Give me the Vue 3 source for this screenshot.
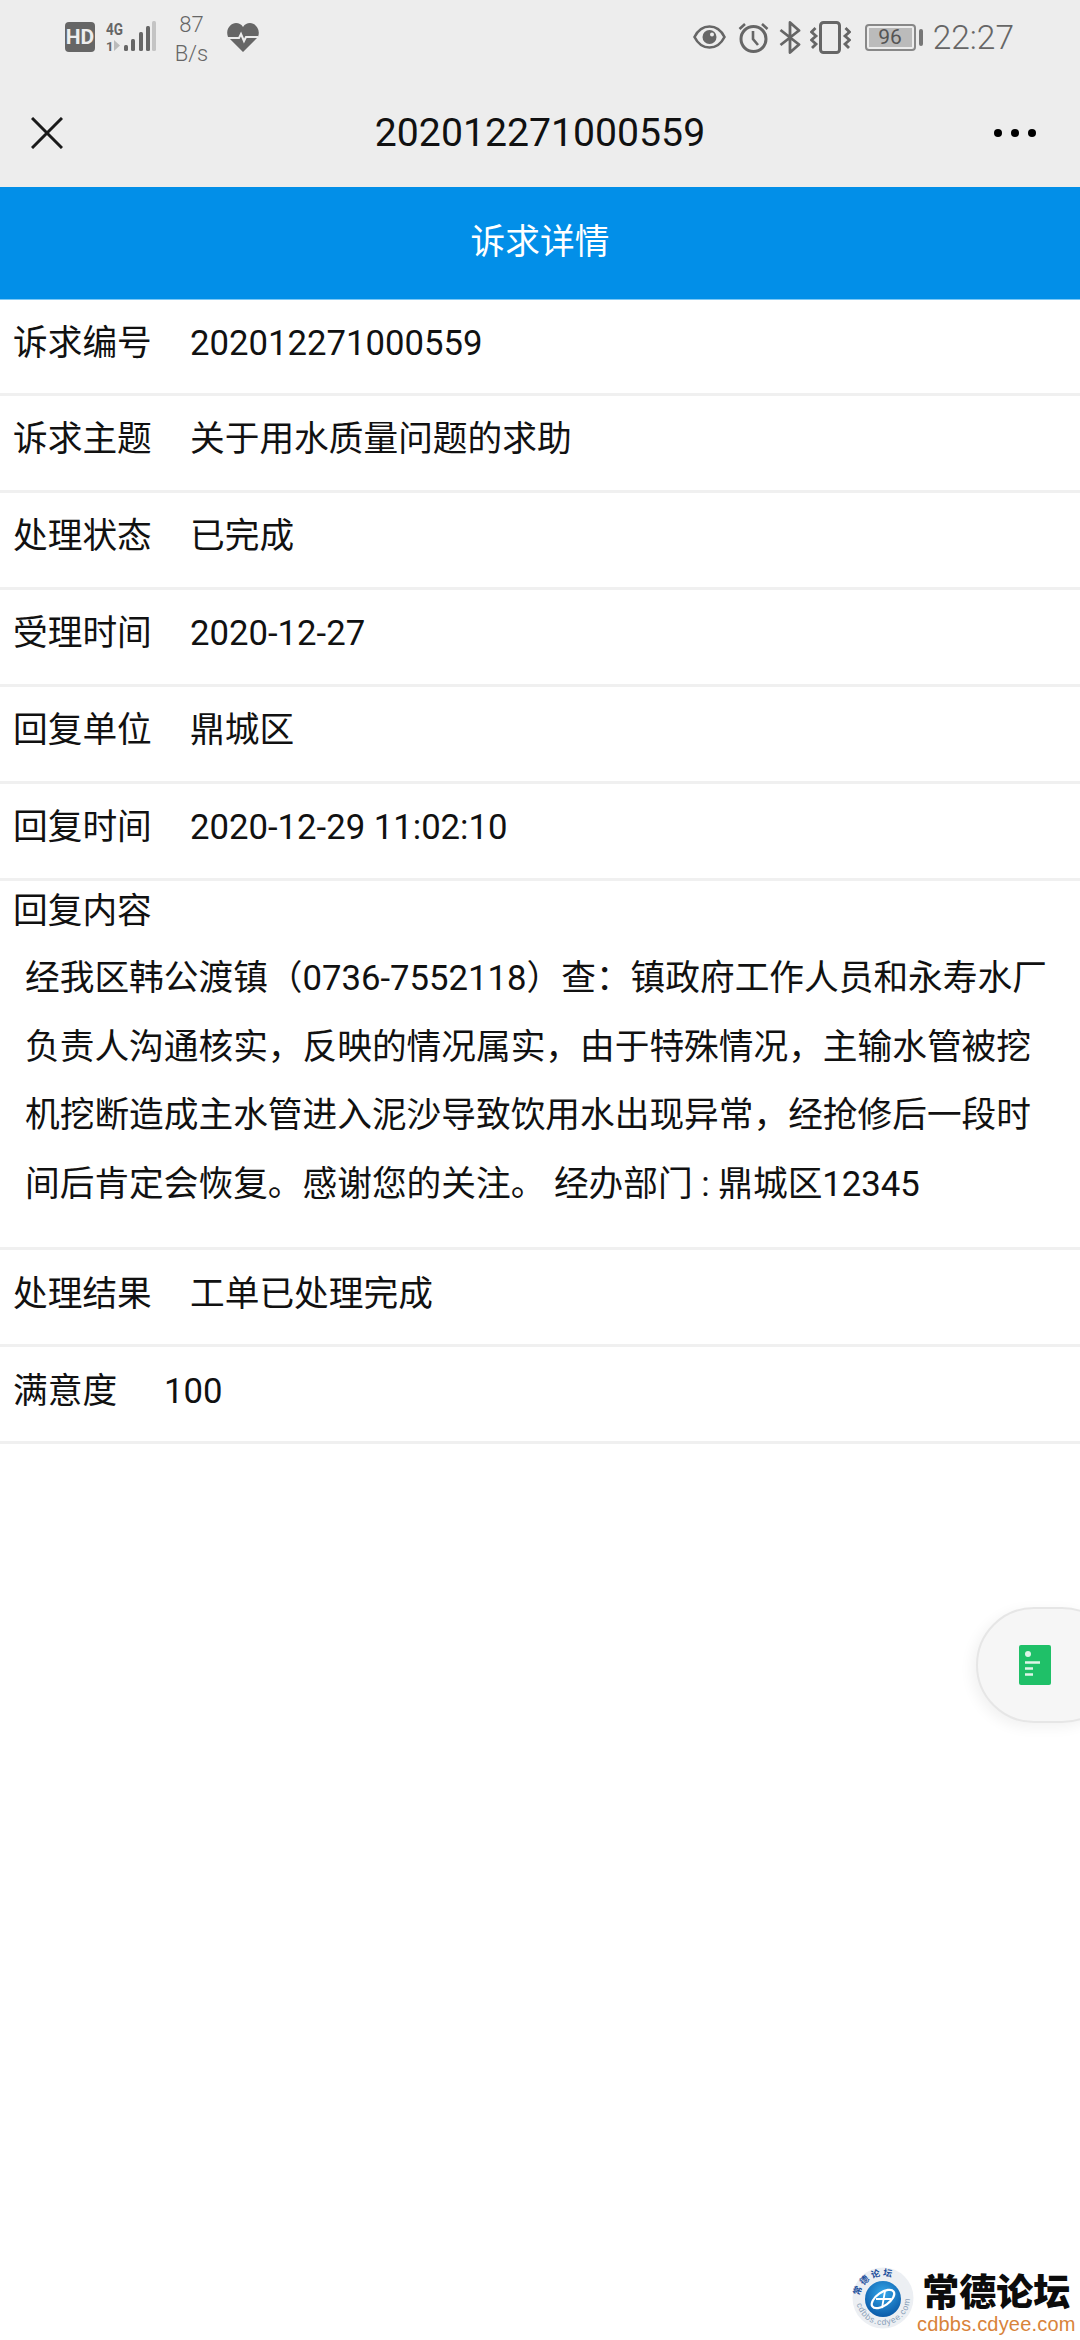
<script setup>
const rows = [
  { label: '诉求编号', value: '202012271000559' },
  { label: '诉求主题', value: '关于用水质量问题的求助' },
  { label: '处理状态', value: '已完成' },
  { label: '受理时间', value: '2020-12-27' },
  { label: '回复单位', value: '鼎城区' },
  { label: '回复时间', value: '2020-12-29 11:02:10' }
]
const bars = [
  { x: 18, y: 24, h: 6 },
  { x: 25, y: 18, h: 12 },
  { x: 33, y: 11, h: 19 },
  { x: 40, y: 5, h: 25 },
  { x: 46, y: 0, h: 30 }
]
</script>

<template>
  <div class="page">
    <header class="status">
      <div class="status-left">
        <svg class="hd" width="30" height="30" viewBox="0 0 30 30">
          <rect width="30" height="30" rx="4" fill="#666" />
          <text x="15" y="22" text-anchor="middle" class="hd-text">HD</text>
        </svg>
        <svg class="net" width="50" height="32" viewBox="0 0 50 32">
          <text x="0" y="14" class="net-text" textLength="17" lengthAdjust="spacingAndGlyphs">4G</text>
          <text x="0" y="30" class="net-small">1</text>
          <path d="M8 19v11l6-5.500z" fill="#bbb" />
          <rect v-for="(b, i) in bars" :key="i" :x="b.x" :y="b.y" width="4" :height="b.h" rx="1.500" :fill="i === 4 ? '#c4c4c4' : '#666'" />
        </svg>
        <div class="speed"><span>87</span><span>B/s</span></div>
        <svg width="32" height="29" viewBox="0 0 32 29">
          <path d="M16 29 1 14C-2 6 4 0 9 0c3 0 5 1 7 4 2-3 4-4 7-4 5 0 11 6 8 14z" fill="#666" />
          <path d="M1 15h11l2-4 3 7 2-4h12" fill="none" stroke="#ededed" stroke-width="2" />
        </svg>
      </div>
      <div class="status-right">
        <svg class="eye" width="33" height="26" viewBox="0 0 33 26">
          <path d="M1.500 13C5 6 10 2.500 16.500 2.500S28 6 31.500 13C28 20 23 23.500 16.500 23.500S5 20 1.500 13z" fill="none" stroke="#666" stroke-width="2.600" />
          <circle cx="16.500" cy="13" r="7" fill="#666" />
          <circle cx="19" cy="10.500" r="2" fill="#ededed" />
        </svg>
        <svg class="alarm" width="31" height="31" viewBox="0 0 31 31">
          <circle cx="15.500" cy="17" r="12.500" fill="none" stroke="#666" stroke-width="3" />
          <path d="M15 9v8l5 6" fill="none" stroke="#666" stroke-width="2.600" />
          <path d="M1.500 7 7 2M29.500 7 24 2" fill="none" stroke="#666" stroke-width="2.600" />
        </svg>
        <svg class="bt" width="22" height="33" viewBox="0 0 22 33">
          <path d="M1.500 9 20 23.500 11 31.500V1.500L20 9.500 1.500 24" fill="none" stroke="#666" stroke-width="2.800" stroke-linejoin="round" />
        </svg>
        <svg class="vib" width="41" height="33" viewBox="0 0 41 33">
          <rect x="10.500" y="1.500" width="19" height="30" rx="3" fill="none" stroke="#666" stroke-width="3" />
          <path d="M5.500 7 1.500 11 6 15 1.500 19 6 23 2 27M35.500 7 39.500 11 35 15 39.500 19 35 23 39 27" fill="none" stroke="#666" stroke-width="2.800" />
        </svg>
        <div class="battery-wrap">
          <div class="battery"><span>96</span></div>
          <i class="battery-nub"></i>
        </div>
        <span class="time">22:27</span>
      </div>
    </header>

    <nav class="nav">
      <svg width="32" height="32" viewBox="0 0 32 32">
        <path d="M1 1 31 31M31 1 1 31" stroke="#1a1a1a" stroke-width="3" fill="none" />
      </svg>
      <span class="nav-title">202012271000559</span>
      <svg class="nav-more" width="42" height="8" viewBox="0 0 42 8">
        <circle cx="4" cy="4" r="4" />
        <circle cx="21" cy="4" r="4" />
        <circle cx="38" cy="4" r="4" />
      </svg>
    </nav>

    <div class="banner">诉求详情</div>

    <section>
      <div v-for="row in rows" :key="row.label" class="row">
        <span class="label">{{ row.label }}</span>
        <span>{{ row.value }}</span>
      </div>
      <div class="reply">
        <div class="reply-label">回复内容</div>
        <p class="reply-text">经我区韩公渡镇（0736-7552118）查：镇政府工作人员和永寿水厂负责人沟通核实，反映的情况属实，由于特殊情况，主输水管被挖机挖断造成主水管进入泥沙导致饮用水出现异常，经抢修后一段时间后肯定会恢复。感谢您的关注。 经办部门 : 鼎城区12345</p>
      </div>
      <div class="row row-low">
        <span class="label">处理结果</span>
        <span>工单已处理完成</span>
      </div>
      <div class="row row-low">
        <span class="label label-short">满意度</span>
        <span>100</span>
      </div>
    </section>

    <div class="float-btn">
      <svg width="32" height="40" viewBox="0 0 32 40">
        <rect width="32" height="40" rx="2" fill="#1fc068" />
        <circle cx="9" cy="9" r="3" fill="#dff5e8" />
        <path d="M6 17.500h15M6 23.500h8M6 29.500h8" stroke="#dff5e8" stroke-width="2.500" />
      </svg>
    </div>

    <div class="mark">
      <svg width="62" height="62" viewBox="0 0 62 62">
        <defs>
          <radialGradient id="globe" cx="50%" cy="35%" r="65%">
            <stop offset="0" stop-color="#35a8ea" />
            <stop offset="1" stop-color="#0a5aa8" />
          </radialGradient>
          <path id="ring-top" d="M7 33a24 24 0 0 1 48 0" />
          <path id="ring-bottom" d="M4 31a27 27 0 0 0 54 0" />
        </defs>
        <circle cx="31" cy="31" r="30.500" fill="#eceff3" />
        <circle cx="31" cy="32" r="18" fill="url(#globe)" />
        <ellipse cx="31" cy="32" rx="13" ry="6.500" transform="rotate(-35 31 32)" fill="none" stroke="#fff" stroke-width="2.200" />
        <path d="M24 32h15M33 24l-3 17" stroke="#fff" stroke-width="1.800" />
        <text class="ring-cn"><textPath href="#ring-top" startOffset="4">常 德 论 坛</textPath></text>
        <text class="ring-en"><textPath href="#ring-bottom" startOffset="6">cdbbs.cdyee.com</textPath></text>
      </svg>
      <div class="mark-text">
        <span class="mark-cn">常德论坛</span>
        <span class="mark-en">cdbbs.cdyee.com</span>
      </div>
    </div>
  </div>
</template>

<style>
html, body { margin: 0; background: #fff; }
</style>

<style scoped>
.page {
  position: relative;
  width: 1080px;
  height: 2340px;
  overflow: hidden;
  background: #fff;
  color: #111;
  font-family: Roboto, "Noto Sans CJK SC", sans-serif;
  font-size: 34.700px;
}
.status {
  box-sizing: border-box;
  height: 74px;
  padding: 0 66px 0 65px;
  display: flex;
  justify-content: space-between;
  align-items: center;
  background: #ededed;
}
.status-left, .status-right { display: flex; align-items: center; }
.status-left { gap: 11px; }
.net { overflow: visible; }
.speed {
  display: flex;
  flex-direction: column;
  align-items: center;
  width: 33px;
  margin: 3px 8px 0 8px;
  font-size: 22px;
  line-height: 29px;
  color: #666;
  font-weight: 300;
}
.hd-text { font: 700 21px Roboto, sans-serif; fill: #ededed; }
.net-text { font: 700 17px Roboto, sans-serif; fill: #666; }
.net-small { font: 700 13px Roboto, sans-serif; fill: #666; }
.alarm { margin-left: 12px; }
.bt { margin-left: 10px; }
.vib { margin-left: 9px; }
.battery-wrap { display: flex; align-items: center; gap: 3px; margin-left: 14px; }
.battery {
  box-sizing: border-box;
  width: 51px;
  height: 27px;
  border: 2px solid #888;
  border-radius: 4px;
  padding: 2px;
  display: flex;
}
.battery span {
  flex: 1;
  background: #bbb;
  color: #555;
  font-size: 21px;
  line-height: 19px;
  text-align: center;
}
.battery-nub { width: 4px; height: 17px; background: #777; border-radius: 2px; }
.time { margin-left: 10px; font-size: 33.500px; font-weight: 300; color: #666; }
.nav {
  box-sizing: border-box;
  height: 113px;
  padding: 5px 31px 0 31px;
  display: grid;
  grid-template-columns: 1fr auto 1fr;
  align-items: center;
  background: #ededed;
}
.nav-title { font-size: 39.200px; }
.nav-more { justify-self: end; margin-right: 13px; }
.banner {
  box-sizing: border-box;
  height: 113px;
  padding-bottom: 9px;
  display: flex;
  justify-content: center;
  align-items: center;
  background: #028fe8;
  border-bottom: 1px solid #7cc8f5;
  color: #fff;
}
.row {
  box-sizing: border-box;
  height: 97px;
  padding: 23px 0 0 13px;
  display: flex;
  gap: 38px;
  line-height: 40px;
  border-bottom: 3px solid #f0f0f0;
}
.row:first-child { height: 96px; }
.row-low { padding-top: 24px; }
.label { width: 139px; white-space: nowrap; }
.label-short { width: 104px; margin-right: 9px; }
.reply {
  box-sizing: border-box;
  height: 369px;
  padding: 10px 0 0 13px;
  border-bottom: 3px solid #f0f0f0;
}
.reply-label { line-height: 40px; }
.reply-text {
  margin: 0;
  padding: 13px 30px 0 12px;
  line-height: 68.600px;
}
.float-btn {
  position: absolute;
  top: 1607px;
  right: -40px;
  box-sizing: border-box;
  width: 144px;
  height: 116px;
  padding-left: 41px;
  display: flex;
  align-items: center;
  background: #f6f6f6;
  border: 2px solid #e6e6e6;
  border-radius: 58px;
  box-shadow: -4px 4px 14px rgba(0, 0, 0, 0.06);
}
.mark {
  position: absolute;
  left: 852px;
  top: 2267px;
  display: flex;
  gap: 3px;
}
.mark-text {
  display: flex;
  flex-direction: column;
  align-items: center;
}
.mark-cn {
  font-family: "Noto Sans CJK SC", sans-serif;
  font-size: 37px;
  font-weight: 900;
  line-height: 47px;
  color: #0c0c0c;
}
.mark-en {
  font-family: "Liberation Sans", sans-serif;
  font-size: 20px;
  line-height: 20px;
  letter-spacing: 0.200px;
  color: #d8833a;
}
.ring-cn { font: 700 9px "Noto Sans CJK SC", sans-serif; fill: #1c4f9c; }
.ring-en { font: 400 8.500px "Liberation Sans", sans-serif; letter-spacing: 0.800px; fill: #8aa0b8; }
</style>
